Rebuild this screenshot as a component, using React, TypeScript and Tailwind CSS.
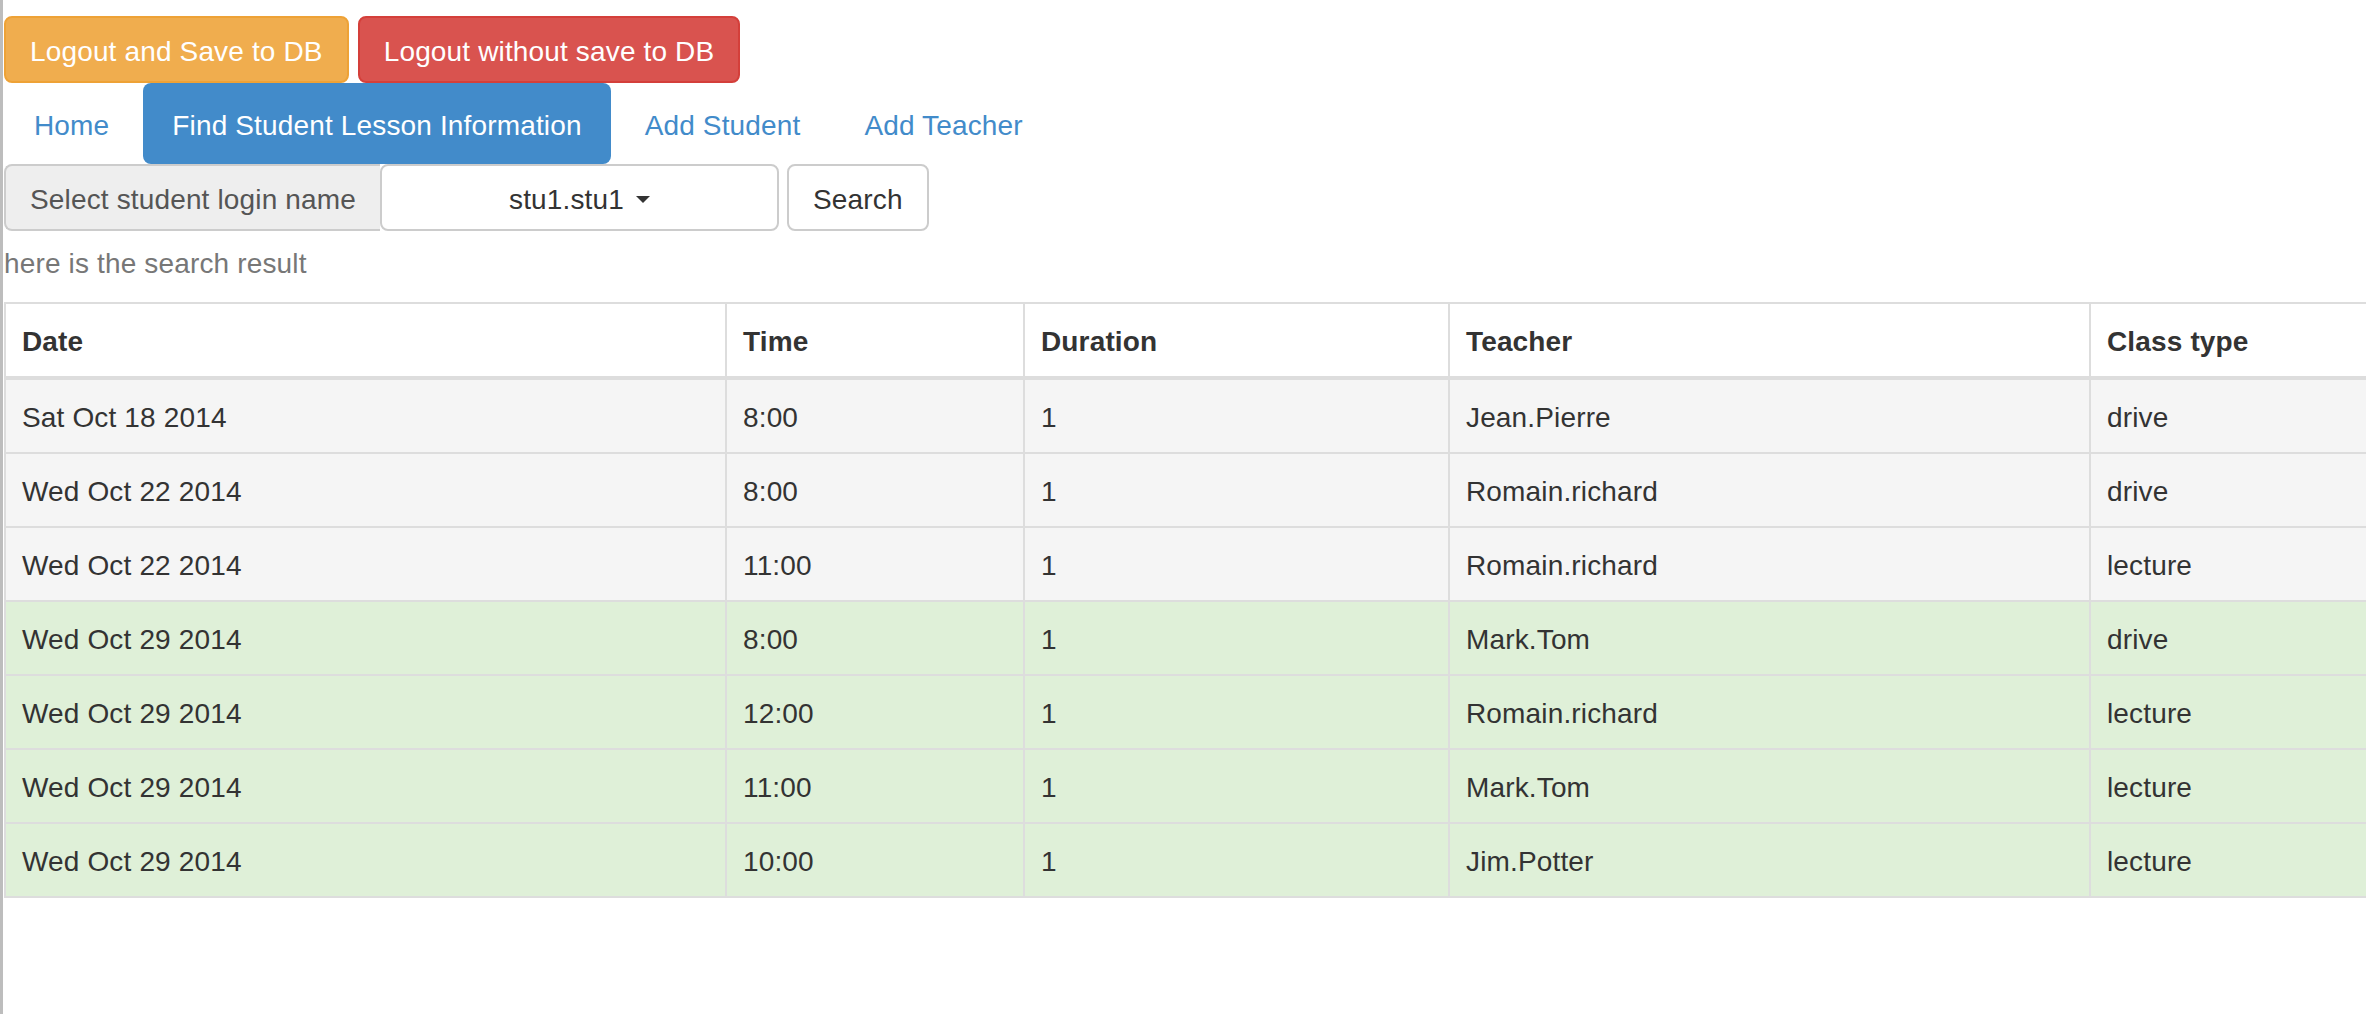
import React from "react";

const rows = [
  { date: "Sat Oct 18 2014", time: "8:00", duration: "1", teacher: "Jean.Pierre", type: "drive", ok: false },
  { date: "Wed Oct 22 2014", time: "8:00", duration: "1", teacher: "Romain.richard", type: "drive", ok: false },
  { date: "Wed Oct 22 2014", time: "11:00", duration: "1", teacher: "Romain.richard", type: "lecture", ok: false },
  { date: "Wed Oct 29 2014", time: "8:00", duration: "1", teacher: "Mark.Tom", type: "drive", ok: true },
  { date: "Wed Oct 29 2014", time: "12:00", duration: "1", teacher: "Romain.richard", type: "lecture", ok: true },
  { date: "Wed Oct 29 2014", time: "11:00", duration: "1", teacher: "Mark.Tom", type: "lecture", ok: true },
  { date: "Wed Oct 29 2014", time: "10:00", duration: "1", teacher: "Jim.Potter", type: "lecture", ok: true },
];

const cell = "border-2 border-[#ddd] px-4 pt-[18px] pb-[14px] text-left align-top leading-[40px]";

export default function App() {
  return (
    <div className="min-h-screen w-full overflow-hidden bg-white border-l-[3px] border-[#bdbdbd] pl-px font-['Liberation_Sans',Arial,sans-serif] text-[28px] leading-[40px] tracking-[0.15px] text-[#333] whitespace-nowrap">
      {/* logout buttons */}
      <div className="flex gap-[9px] pt-4">
        <button className="h-[67px] rounded-[8px] border-2 border-[#eea236] bg-[#f0ad4e] px-6 pt-[4px] text-white">
          Logout and Save to DB
        </button>
        <button className="h-[67px] rounded-[8px] border-2 border-[#d43f3a] bg-[#d9534f] px-6 pt-[4px] text-white">
          Logout without save to DB
        </button>
      </div>

      {/* nav pills */}
      <ul className="flex gap-1">
        <li>
          <a className="flex h-[81px] items-center rounded-[8px] px-[30px] pt-[4px] text-[#428bca]">Home</a>
        </li>
        <li>
          <a className="flex h-[81px] items-center rounded-[8px] bg-[#428bca] px-[29px] pt-[4px] text-white">
            Find Student Lesson Information
          </a>
        </li>
        <li>
          <a className="flex h-[81px] items-center rounded-[8px] px-[30px] pt-[4px] text-[#428bca]">Add Student</a>
        </li>
        <li>
          <a className="flex h-[81px] items-center rounded-[8px] px-[30px] pt-[4px] text-[#428bca]">Add Teacher</a>
        </li>
      </ul>

      {/* search form */}
      <div className="flex">
        <span className="flex h-[67px] w-[376px] items-center rounded-l-[8px] border-2 border-r-0 border-[#ccc] bg-[#eee] px-6 pt-[4px] text-[#555]">
          Select student login name
        </span>
        <button className="flex h-[67px] w-[399px] items-center justify-center rounded-[8px] border-2 border-[#ccc] bg-white pt-[4px] text-[#333]">
          stu1.stu1
          <span className="ml-[12px] inline-block h-0 w-0 border-x-[7px] border-t-[7px] border-x-transparent border-t-[#333]" />
        </button>
        <button className="ml-2 h-[67px] rounded-[8px] border-2 border-[#ccc] bg-white px-6 pt-[4px] text-[#333]">
          Search
        </button>
      </div>

      <p className="mt-[13px] text-[#777]">here is the search result</p>

      <table className="mt-[18px] w-[2500px] table-fixed border-collapse">
        <colgroup>
          <col className="w-[721px]" />
          <col className="w-[298px]" />
          <col className="w-[425px]" />
          <col className="w-[641px]" />
          <col className="w-[415px]" />
        </colgroup>
        <thead>
          <tr className="bg-white">
            {["Date", "Time", "Duration", "Teacher", "Class type"].map((h) => (
              <th key={h} className={`${cell} border-b-4 font-bold`}>
                {h}
              </th>
            ))}
          </tr>
        </thead>
        <tbody>
          {rows.map((r, i) => (
            <tr key={i} className={r.ok ? "bg-[#dff0d8]" : "bg-[#f5f5f5]"}>
              <td className={cell}>{r.date}</td>
              <td className={cell}>{r.time}</td>
              <td className={cell}>{r.duration}</td>
              <td className={cell}>{r.teacher}</td>
              <td className={cell}>{r.type}</td>
            </tr>
          ))}
        </tbody>
      </table>
    </div>
  );
}
